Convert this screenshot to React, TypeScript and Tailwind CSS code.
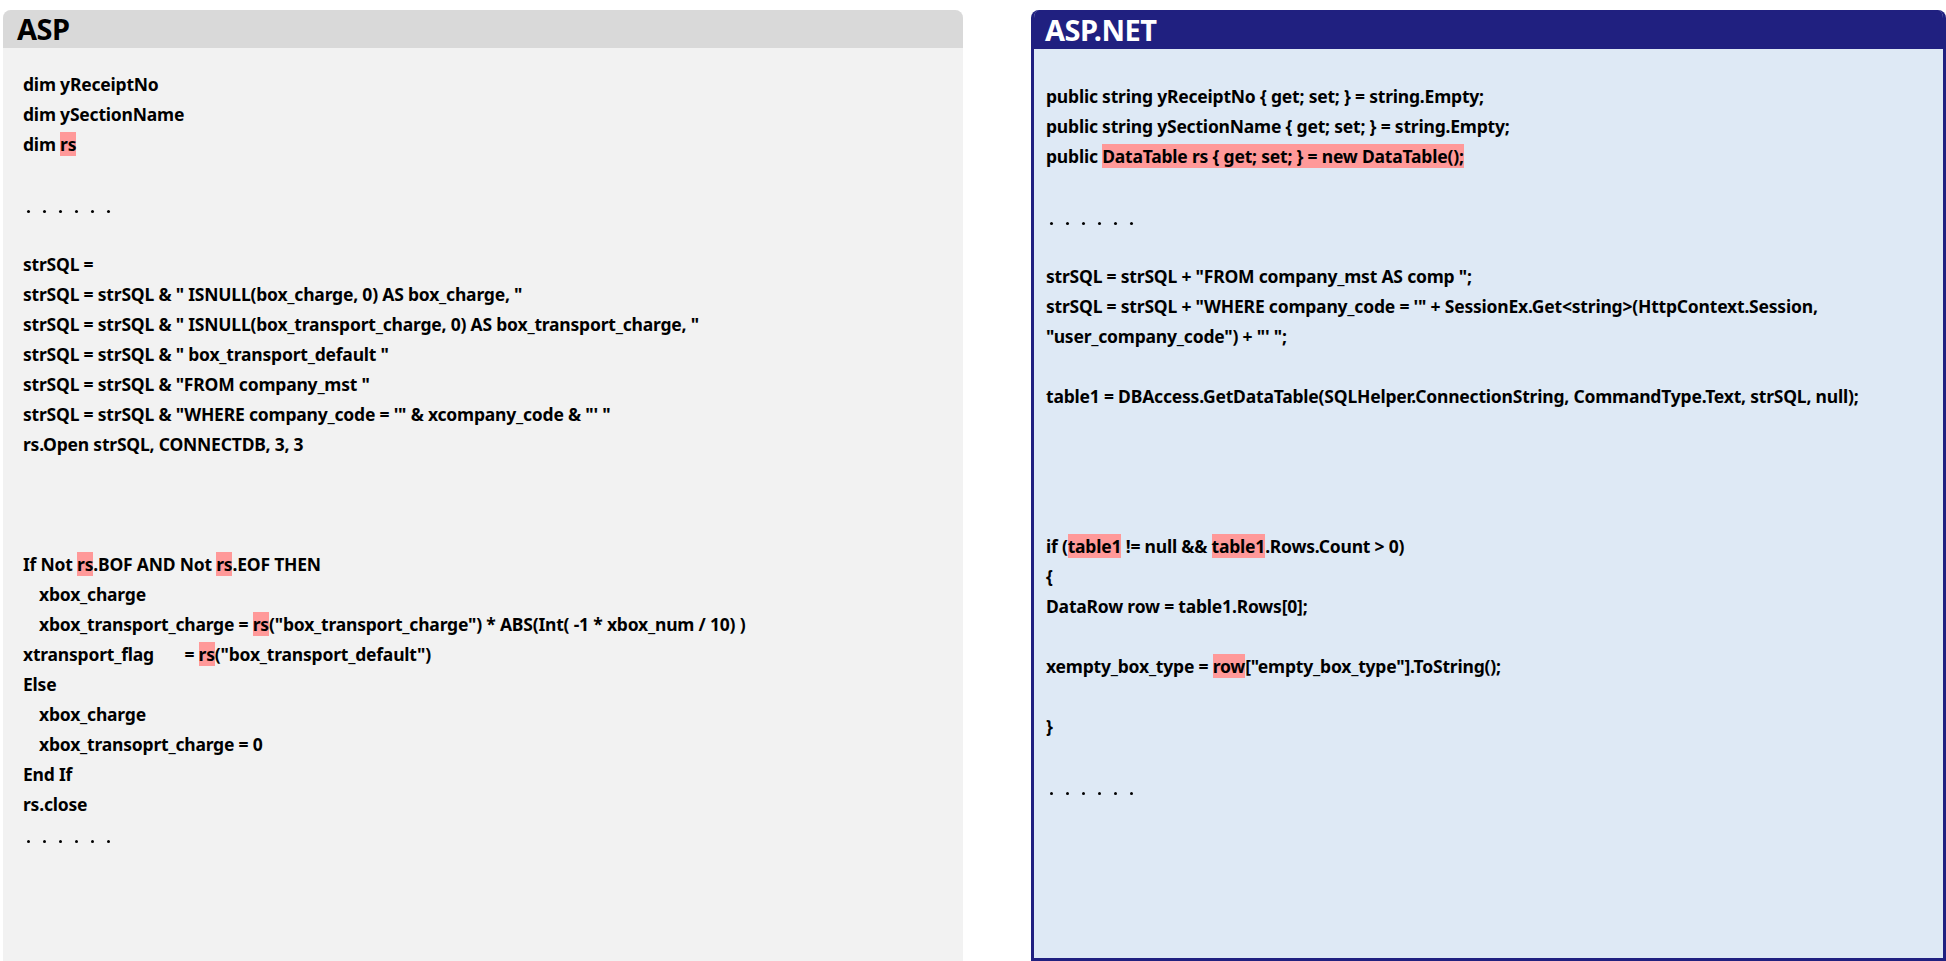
const font = { fontFamily: "'Noto Sans', Lato, sans-serif" };

type Seg = string | { hl: string };

const H = ({ children }: { children: string }) => (
  <span className="bg-[#ff9999]">{children}</span>
);

const Dots = () => (
  <div className="flex h-[30px] items-end gap-[13px] pb-[6px] pl-[4px]">
    {Array.from({ length: 6 }).map((_, i) => (
      <span key={i} className="h-[3px] w-[3px] rounded-full bg-black" />
    ))}
  </div>
);

const Line = ({ parts, indent }: { parts?: Seg[]; indent?: boolean }) => (
  <div className={`h-[30px] whitespace-pre leading-[30px] ${indent ? "pl-[16px]" : ""}`}>
    {parts?.map((p, i) => (typeof p === "string" ? <span key={i}>{p}</span> : <H key={i}>{p.hl}</H>))}
  </div>
);

const aspLines: (Seg[] | "dots" | null | { indent: Seg[] })[] = [
  ["dim yReceiptNo"],
  ["dim ySectionName"],
  ["dim ", { hl: "rs" }],
  null,
  "dots",
  null,
  ["strSQL ="],
  ['strSQL = strSQL & " ISNULL(box_charge, 0) AS box_charge, "'],
  ['strSQL = strSQL & " ISNULL(box_transport_charge, 0) AS box_transport_charge, "'],
  ['strSQL = strSQL & " box_transport_default "'],
  ['strSQL = strSQL & "FROM company_mst "'],
  ["strSQL = strSQL & \"WHERE company_code = '\" & xcompany_code & \"' \""],
  ["rs.Open strSQL, CONNECTDB, 3, 3"],
  null,
  null,
  null,
  ["If Not ", { hl: "rs" }, ".BOF AND Not ", { hl: "rs" }, ".EOF THEN"],
  { indent: ["xbox_charge"] },
  { indent: ["xbox_transport_charge = ", { hl: "rs" }, '("box_transport_charge") * ABS(Int( -1 * xbox_num / 10) )'] },
  ["xtransport_flag       = ", { hl: "rs" }, '("box_transport_default")'],
  ["Else"],
  { indent: ["xbox_charge"] },
  { indent: ["xbox_transoprt_charge = 0"] },
  ["End If"],
  ["rs.close"],
  "dots",
];

const netLines: (Seg[] | "dots" | null)[] = [
  ["public string yReceiptNo { get; set; } = string.Empty;"],
  ["public string ySectionName { get; set; } = string.Empty;"],
  ["public ", { hl: "DataTable rs { get; set; } = new DataTable();" }],
  null,
  "dots",
  null,
  ['strSQL = strSQL + "FROM company_mst AS comp ";'],
  ["strSQL = strSQL + \"WHERE company_code = '\" + SessionEx.Get<string>(HttpContext.Session,"],
  ['"user_company_code") + "\' ";'],
  null,
  ["table1 = DBAccess.GetDataTable(SQLHelper.ConnectionString, CommandType.Text, strSQL, null);"],
  null,
  null,
  null,
  null,
  ["if (", { hl: "table1" }, " != null && ", { hl: "table1" }, ".Rows.Count > 0)"],
  ["{"],
  ["DataRow row = table1.Rows[0];"],
  null,
  ["xempty_box_type = ", { hl: "row" }, '["empty_box_type"].ToString();'],
  null,
  ["}"],
  null,
  "dots",
];

const render = (l: any, i: number) => {
  if (l === "dots") return <Dots key={i} />;
  if (l === null) return <Line key={i} />;
  if (Array.isArray(l)) return <Line key={i} parts={l} />;
  return <Line key={i} parts={l.indent} indent />;
};

export default function App() {
  return (
    <div className="flex h-[961px] w-[1946px] gap-[68px] bg-white pl-[3px] pt-[10px]" style={font}>
      <div className="flex w-[960px] flex-col overflow-hidden rounded-t-[8px] bg-[#f2f2f2]">
        <div className="flex h-[38px] items-center bg-[#d9d9d9] pl-[14px] text-[29px] font-bold tracking-[-0.5px] text-black">ASP</div>
        <div className="pl-[20px] pt-[21px] text-[17.5px] font-bold tracking-[-0.2px] text-black">{aspLines.map(render)}</div>
      </div>
      <div className="flex flex-1 flex-col overflow-hidden rounded-t-[8px] border-[3px] border-t-0 border-[#202080] bg-[#dee9f5]">
        <div className="-mx-[3px] flex h-[39px] items-center bg-[#202080] pl-[14px] text-[29px] font-bold tracking-[-0.5px] text-white">ASP.NET</div>
        <div className="pl-[12px] pt-[32px] text-[17.5px] font-bold tracking-[-0.2px] text-black">{netLines.map(render)}</div>
      </div>
    </div>
  );
}
